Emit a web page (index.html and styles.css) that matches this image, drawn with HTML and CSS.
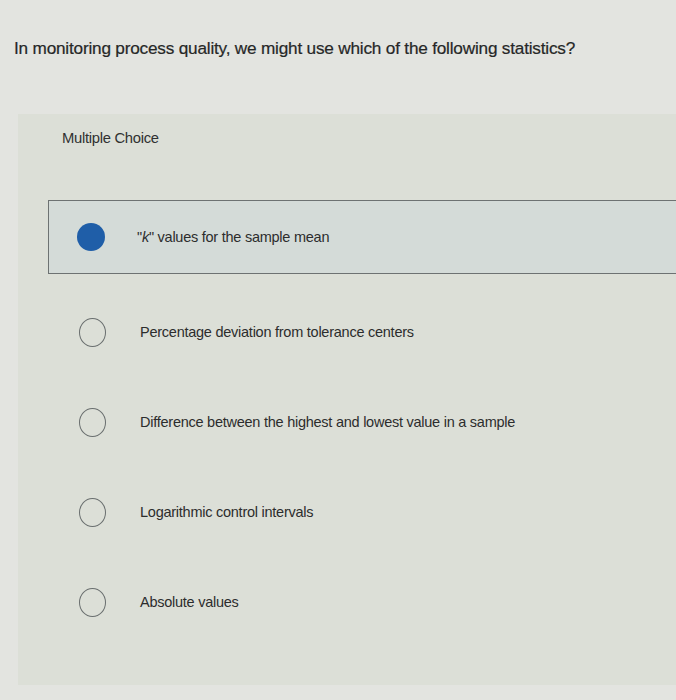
FILE: index.html
```html
<!DOCTYPE html>
<html>
<head>
<meta charset="utf-8">
<link rel="stylesheet" href="styles.css">
</head>
<body>
<div class="page">
  <p class="question">In monitoring process quality, we might use which of the following statistics?</p>
  <div class="card">
    <div class="label">Multiple Choice</div>
    <ul class="options">
      <li class="option selected"><span class="radio"></span><span class="text">"<i>k</i>" values for the sample mean</span></li>
      <li class="option"><span class="radio"></span><span class="text">Percentage deviation from tolerance centers</span></li>
      <li class="option"><span class="radio"></span><span class="text">Difference between the highest and lowest value in a sample</span></li>
      <li class="option"><span class="radio"></span><span class="text">Logarithmic control intervals</span></li>
      <li class="option"><span class="radio"></span><span class="text">Absolute values</span></li>
    </ul>
  </div>
</div>
</body>
</html>
```
FILE: styles.css
```css
html, body {
  margin: 0;
  padding: 0;
  background: #e3e4e0;
  overflow: hidden;
}
.page {
  width: 676px;
  height: 700px;
  font-family: "Liberation Sans", Arial, sans-serif;
  color: #2c2d2d;
}
.question {
  margin: 0;
  padding: 37px 0 0 14px;
  font-size: 17.2px;
  line-height: 22px;
  letter-spacing: -0.2px;
  color: #262727;
  -webkit-text-stroke: 0.2px #262727;
}
.card {
  margin: 55px 0 0 18px;
  padding: 14px 0 46px 30px;
  background: #dcdfd7;
}
.label {
  padding-left: 14px;
  font-size: 14.8px;
  line-height: 20px;
  color: #303131;
  letter-spacing: -0.3px;
}
.options {
  list-style: none;
  margin: 52px -2px 0 0;
  padding: 0;
  display: flex;
  flex-direction: column;
  gap: 16px;
}
.option {
  height: 72px;
  display: flex;
  align-items: center;
  padding-left: 28px;
  border: 1px solid transparent;
  font-size: 14.5px;
  color: #2c2d2d;
  letter-spacing: -0.25px;
}
.option.selected {
  background: #d4dbd8;
  border-color: #6d7272;
  margin-bottom: 5px;
}
.radio {
  width: 25px;
  height: 27px;
  border: 1.5px solid #6a6f6f;
  border-radius: 50%;
  margin-left: 2px;
  margin-right: 34px;
  flex: none;
}
.option.selected .radio {
  width: 28px;
  height: 28px;
  border: none;
  background: #1f5ea8;
  margin-left: 0;
  margin-right: 32px;
}
.text i {
  font-style: italic;
}
```
